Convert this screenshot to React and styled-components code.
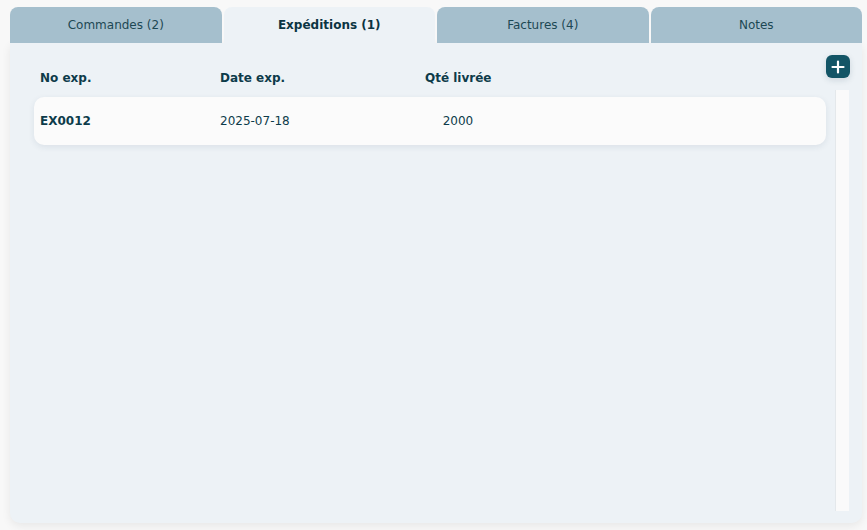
import React from "react";
import styled, { createGlobalStyle } from "styled-components";

const tabs = [
  { label: "Commandes (2)" },
  { label: "Expéditions (1)", active: true },
  { label: "Factures (4)" },
  { label: "Notes" },
];

const shipments = [{ id: "EX0012", date: "2025-07-18", qty: 2000 }];

const App = () => {
  return (
    <>
      <GlobalStyle />
      <Page>
        <TabBar>
          {tabs.map((t) => (
            <Tab key={t.label} $active={t.active}>
              {t.label}
            </Tab>
          ))}
        </TabBar>
        <Panel>
          <Content>
            <HeadRow>
              <Cell>No exp.</Cell>
              <Cell>Date exp.</Cell>
              <Cell $center>Qté livrée</Cell>
            </HeadRow>
            {shipments.map((s) => (
              <Card key={s.id}>
                <Cell $bold>{s.id}</Cell>
                <Cell>{s.date}</Cell>
                <Cell $center>{s.qty}</Cell>
              </Card>
            ))}
          </Content>
          <Side>
            <AddButton aria-label="Ajouter">
              <svg width="14" height="14" viewBox="0 0 14 14">
                <path
                  d="M7 1.5v11M1.5 7h11"
                  stroke="#fff"
                  strokeWidth="2.2"
                  strokeLinecap="round"
                />
              </svg>
            </AddButton>
            <Track />
          </Side>
        </Panel>
      </Page>
    </>
  );
};

export default App;

const GlobalStyle = createGlobalStyle`
  body {
    margin: 0;
    background: #f8f8f8;
    font-family: "DejaVu Sans", Verdana, sans-serif;
    font-size: 12px;
    color: #0d3b4a;
  }
`;

const Page = styled.div`
  width: 852px;
  padding: 7px 5px 7px 10px;
`;

const TabBar = styled.div`
  display: grid;
  grid-template-columns: repeat(4, 1fr);
  gap: 2px;
  height: 36px;
`;

const Tab = styled.div`
  display: flex;
  align-items: center;
  justify-content: center;
  border-radius: 8px 8px 0 0;
  background: ${(p) => (p.$active ? "#edf2f6" : "#a5bfcd")};
  color: ${(p) => (p.$active ? "#0b3442" : "#1d4854")};
  font-weight: ${(p) => (p.$active ? 700 : 400)};
  padding-bottom: 1px;
`;

const Panel = styled.div`
  display: flex;
  height: 480px;
  box-sizing: border-box;
  padding: 12px 12px 12px 24px;
  background: #edf2f6;
  border-radius: 0 0 10px 10px;
  box-shadow: 0 3px 10px rgba(0, 0, 0, 0.07);
`;

const Content = styled.div`
  flex: 1;
  display: flex;
  flex-direction: column;
`;

const HeadRow = styled.div`
  display: grid;
  grid-template-columns: 180px 205px 66px 1fr;
  padding: 15px 6px 11px;
  line-height: 16px;
  font-weight: 700;
`;

const Card = styled.div`
  display: grid;
  grid-template-columns: 180px 205px 66px 1fr;
  align-items: center;
  height: 48px;
  padding: 0 6px;
  background: #fbfbfb;
  border-radius: 10px;
  box-shadow: 0 2px 6px rgba(30, 60, 90, 0.09);
`;

const Cell = styled.div`
  font-weight: ${(p) => (p.$bold ? 700 : "inherit")};
  text-align: ${(p) => (p.$center ? "center" : "left")};
  white-space: nowrap;
`;

const Side = styled.div`
  width: 24px;
  display: flex;
  flex-direction: column;
  align-items: flex-end;
  gap: 12px;
`;

const AddButton = styled.button`
  width: 24px;
  height: 23px;
  border: none;
  border-radius: 6px;
  background: #135566;
  display: grid;
  place-items: center;
  padding: 0;
  box-shadow: 0 2px 6px rgba(20, 60, 80, 0.15);
  cursor: pointer;
`;

const Track = styled.div`
  flex: 1;
  width: 13px;
  margin-right: 1px;
  background: #fafafa;
  border-left: 1px solid #e4e8eb;
`;
